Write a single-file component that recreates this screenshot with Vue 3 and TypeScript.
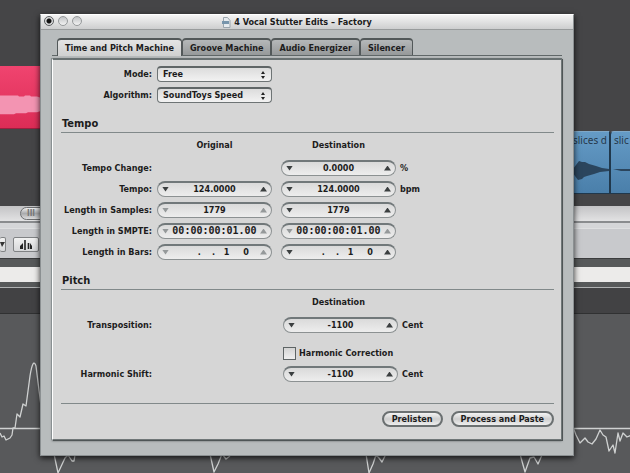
<script setup lang="ts">
import { ref } from 'vue'

interface Stepper {
  id: string
  value: string
  dimDown?: boolean
  dimUp?: boolean
  kind?: 'mono' | 'bars'
}

interface Row {
  label: string
  original?: Stepper
  destination: Stepper
  unit?: string
}

const tabs = ['Time and Pitch Machine', 'Groove Machine', 'Audio Energizer', 'Silencer']
const activeTab = ref(0)
const mode = ref('Free')
const algorithm = ref('SoundToys Speed')
const correction = ref(false)

const tempoRows = ref<Row[]>([
  { label: 'Tempo Change:', destination: { id: 'change', value: '0.0000' }, unit: '%' },
  {
    label: 'Tempo:',
    original: { id: 'tempo-o', value: '124.0000' },
    destination: { id: 'tempo', value: '124.0000' },
    unit: 'bpm',
  },
  {
    label: 'Length in Samples:',
    original: { id: 'samples-o', value: '1779', dimDown: true, dimUp: true },
    destination: { id: 'samples', value: '1779' },
  },
  {
    label: 'Length in SMPTE:',
    original: { id: 'smpte-o', value: '00:00:00:01.00', dimDown: true, dimUp: true, kind: 'mono' },
    destination: { id: 'smpte', value: '00:00:00:01.00', dimDown: true, dimUp: true, kind: 'mono' },
  },
  {
    label: 'Length in Bars:',
    original: { id: 'bars-o', value: '.    .   1     0', dimDown: true, dimUp: true, kind: 'bars' },
    destination: { id: 'bars', value: '.    .   1     0', kind: 'bars' },
  },
])

const transposition = ref('-1100')
const harmonicShift = ref('-1100')
</script>

<template>
  <div class="desktop">
    <section class="arrange">
      <svg class="region pink" viewBox="0 0 60 63" preserveAspectRatio="none">
        <path d="M0 30h18l1 1h5l1-1h5l1 1h6l3 1h20v14H40l-3 1h-9l-2 1H16l-2 1H0z" fill="#f394b2" />
      </svg>
      <div class="region blue first">
        <span>slices d</span>
        <svg class="wave" viewBox="0 0 36 20" preserveAspectRatio="none">
          <path d="M0 9l3-4 3-4 3 1h3l4 2 7 2 6 2 7 1v2l-9 1-6 2-7 2-3 1-2 2-4 1-3-4-2-3z" fill="#2b455d" />
        </svg>
      </div>
      <div class="region blue second">
        <span>slic</span>
        <svg class="wave" viewBox="0 0 36 20" preserveAspectRatio="none">
          <path d="M0 9h36v2H8z" fill="#2b455d" />
        </svg>
      </div>
    </section>
    <div class="scroll-strip"><span class="thumb">III</span></div>
    <div class="tool-strip">
      <button class="tool" type="button" aria-label="Tool menu">
        <svg width="5" height="5" viewBox="0 0 5 5"><path d="M0 0h5L2 5z" fill="#333" /></svg>
      </button>
      <button class="tool" type="button" aria-label="Catch">
        <svg width="14" height="12" viewBox="0 0 14 12">
          <path d="M6 1v10M9.500 4v6" stroke="#222" stroke-width="1.600" />
          <path d="M4 4v6H1V7zM11 4v6h2V7z" fill="#222" />
        </svg>
      </button>
    </div>
    <div class="ruler"></div>
    <div class="marker"></div>
    <div class="sample">
      <svg class="sample-wave" width="630" height="160" viewBox="0 313 630 160">
        <path d="M0 427.500H630" />
        <path d="M0 432l2 4 2-1 2 4 2-1 2-1 2-3 1-7h2l2-14 3 3 3-13 3 2 4-30q3-19 6-10l5 40" />
        <path d="M54 453l4 19 7-15 3-3 4 6h2l1-6M210 453l4 18 4-8 4-10 4 5 4-3M366 453l3 19 4-9 3-9 3 3 3 4 4-8M520 453l5 18 5-14 4-1 4 7 4-9" />
        <path d="M573 426l3 8 4 8 5-5 3 4 4 2 4-5 4-9 3 5 3 2 3 14 4-6 2 8 3-20 2 8 3-8 4 4 5-2" />
      </svg>
    </div>

    <main class="window">
      <header class="titlebar">
        <div class="lights">
          <button class="light close" type="button" aria-label="Close"></button>
          <button class="light" type="button" aria-label="Minimise"></button>
          <button class="light" type="button" aria-label="Zoom"></button>
        </div>
        <svg width="9" height="11" viewBox="0 0 9 11">
          <path d="M1.500.5h4l2.500 3v7h-6.500z" fill="#e6ebef" stroke="#9aa5ad" />
          <path d="M0 4h7v3H0z" fill="#7795ac" />
        </svg>
        <h1>4 Vocal Stutter Edits – Factory</h1>
      </header>

      <nav class="tabs" role="tablist">
        <button
          v-for="(tab, i) in tabs"
          :key="tab"
          type="button"
          role="tab"
          class="tab"
          :class="{ active: i === activeTab }"
          :aria-selected="i === activeTab"
          @click="activeTab = i"
        >{{ tab }}</button>
      </nav>

      <div class="panel">
        <div class="grid">
          <label for="mode">Mode:</label>
          <div class="popup">
            <select id="mode" v-model="mode"><option>Free</option></select>
            <svg width="4" height="8" viewBox="0 0 4 8"><path d="M0 3l2-3 2 3zM0 5h4L2 8z" fill="#222" /></svg>
          </div>
        </div>
        <div class="grid">
          <label for="algorithm">Algorithm:</label>
          <div class="popup">
            <select id="algorithm" v-model="algorithm"><option>SoundToys Speed</option></select>
            <svg width="4" height="8" viewBox="0 0 4 8"><path d="M0 3l2-3 2 3zM0 5h4L2 8z" fill="#222" /></svg>
          </div>
        </div>

        <h2>Tempo</h2>
        <div class="grid heads">
          <span class="col-original">Original</span>
          <span class="col-destination">Destination</span>
        </div>
        <div v-for="row in tempoRows" :key="row.label" class="grid">
          <label :for="row.destination.id">{{ row.label }}</label>
          <div v-if="row.original" class="stepper" :class="row.original.kind">
            <button type="button" class="down" :class="{ dim: row.original.dimDown }" aria-label="Decrease"></button>
            <input v-model="row.original.value" type="text" :aria-label="row.label + ' original'" />
            <button type="button" class="up" :class="{ dim: row.original.dimUp }" aria-label="Increase"></button>
          </div>
          <div class="stepper col-destination" :class="row.destination.kind">
            <button type="button" class="down" :class="{ dim: row.destination.dimDown }" aria-label="Decrease"></button>
            <input :id="row.destination.id" v-model="row.destination.value" type="text" />
            <button type="button" class="up" :class="{ dim: row.destination.dimUp }" aria-label="Increase"></button>
          </div>
          <span v-if="row.unit">{{ row.unit }}</span>
        </div>

        <h2>Pitch</h2>
        <div class="grid heads">
          <span class="col-destination">Destination</span>
        </div>
        <div class="grid pitch">
          <label for="transposition">Transposition:</label>
          <div class="stepper col-destination">
            <button type="button" class="down" aria-label="Decrease"></button>
            <input id="transposition" v-model="transposition" type="text" />
            <button type="button" class="up" aria-label="Increase"></button>
          </div>
          <span>Cent</span>
        </div>
        <div class="grid pitch check-row">
          <label class="check col-destination">
            <input v-model="correction" type="checkbox" />
            <span>Harmonic Correction</span>
          </label>
        </div>
        <div class="grid pitch">
          <label for="shift">Harmonic Shift:</label>
          <div class="stepper col-destination">
            <button type="button" class="down" aria-label="Decrease"></button>
            <input id="shift" v-model="harmonicShift" type="text" />
            <button type="button" class="up" aria-label="Increase"></button>
          </div>
          <span>Cent</span>
        </div>

        <footer class="actions">
          <button type="button">Prelisten</button>
          <button type="button">Process and Paste</button>
        </footer>
      </div>
    </main>
  </div>
</template>

<style>
body {
  background: #58595b;
}
</style>

<style scoped>
.desktop {
  position: relative;
  display: flex;
  flex-direction: column;
  height: 100vh;
  overflow: hidden;
  background: #454547;
  color: #1c1c1c;
  font: bold 9px/14px "DejaVu Sans Condensed", "DejaVu Sans", sans-serif;
}

button,
input,
select {
  font: inherit;
  color: inherit;
  margin: 0;
  padding: 0;
  border: 0;
  outline: 0;
  background: none;
  appearance: none;
}

.arrange {
  position: relative;
  flex: none;
  height: 206px;
}

.region {
  position: absolute;
  box-sizing: border-box;
  height: 63px;
}

.pink {
  top: 66px;
  left: 0;
  width: 60px;
  background: linear-gradient(#f0446f, #dc2c56);
  border-bottom: 1px solid #9b1f3f;
}

.blue {
  top: 131px;
  padding: 1px 0 0 5px;
  overflow: hidden;
  border: 1px solid #20384c;
  border-top-color: #7fa8c8;
  border-radius: 4px 0 0 0;
  background: linear-gradient(#659bc6, #4a7faa);
  color: #26384a;
  font: 10px/14px "Noto Sans", sans-serif;
  white-space: nowrap;
}

.first {
  left: 567px;
  width: 43px;
}

.second {
  left: 610px;
  right: -20px;
  padding-left: 3px;
}

.wave {
  position: absolute;
  right: 0;
  top: 28px;
  width: 36px;
  height: 20px;
}

.scroll-strip {
  flex: none;
  box-sizing: border-box;
  height: 22px;
  padding-top: 1px;
  background: linear-gradient(#c3c3c5, #e2e2e3 15px, #8a8c8e 15px, #8a8c8e 17px, #d5d6d8 17px);
}

.thumb {
  display: block;
  box-sizing: border-box;
  width: 60px;
  height: 13px;
  margin-left: 20px;
  padding-left: 6px;
  border: 1px solid #6d6f71;
  border-radius: 7px;
  background: linear-gradient(#ededee, #aaabad 50%, #dcdcdd);
  color: #777;
  font-size: 8px;
  line-height: 11px;
}

.tool-strip {
  display: flex;
  flex: none;
  gap: 7px;
  box-sizing: border-box;
  height: 31px;
  padding: 8px 0 0;
  border-top: 1px solid #dedfe0;
  border-bottom: 1px solid #3b3c3d;
  background: #c8c9cc;
}

.tool {
  display: flex;
  align-items: center;
  justify-content: center;
  box-sizing: border-box;
  width: 26px;
  height: 15px;
  border: 1px solid #808284;
  border-radius: 2px;
  background: linear-gradient(#f1f1f1, #d6d7d9);
}

.tool:first-child {
  width: 6px;
  border-left: 0;
  overflow: hidden;
}

.ruler {
  flex: none;
  box-sizing: border-box;
  height: 28px;
  border: solid #57595a;
  border-width: 8px 0 5px;
  background: #ecebea;
}

.marker {
  flex: none;
  box-sizing: border-box;
  height: 27px;
  border-top: 1px solid #b0b2b3;
  border-bottom: 1px solid #303132;
  background: #424244;
}

.sample {
  flex: 1;
  overflow: hidden;
  background: #58595b;
}

.sample-wave {
  display: block;
  fill: none;
  stroke: #cfd1d1;
  stroke-width: 1.300;
  stroke-linejoin: round;
}

.window {
  position: absolute;
  inset: 14px 56px 17px 40px;
  display: flex;
  flex-direction: column;
  background: #b8bcbd;
  border: 1px solid #8b9092;
  border-top-color: #fff;
  box-sizing: border-box;
  box-shadow: 0 2px 6px rgba(0, 0, 0, 0.8);
}

.titlebar {
  display: flex;
  align-items: center;
  justify-content: center;
  gap: 3px;
  position: relative;
  flex: none;
  box-sizing: border-box;
  height: 15px;
  padding-right: 20px;
  border-bottom: 1px solid #989b9c;
  background: linear-gradient(#f4f4f4, #cdcecf);
}

.titlebar h1 {
  margin: 0;
  font-size: 9px;
  line-height: 14px;
}

.lights {
  position: absolute;
  left: 3px;
  top: 1px;
  display: flex;
  gap: 4px;
}

.light {
  box-sizing: border-box;
  width: 10px;
  height: 10px;
  border: 1px solid #96999b;
  border-radius: 50%;
  background: linear-gradient(#c2c4c6, #f2f2f2);
}

.close {
  border-color: #5b5e60;
  background: radial-gradient(circle, #111 0 2px, #d8d9da 3px);
}

.tabs {
  display: flex;
  flex: none;
  box-sizing: border-box;
  height: 26px;
  margin: 0 11px;
  padding: 8px 0 0 5px;
  border-bottom: 1px solid #606768;
}

.tab {
  flex: none;
  box-sizing: border-box;
  height: 17px;
  padding: 0 7px;
  border: 1px solid #525859;
  border-top-width: 2px;
  border-bottom: 0;
  border-radius: 4px 4px 0 0;
  background: linear-gradient(#b5b8b9, #96999a);
  line-height: 14px;
  white-space: nowrap;
}

.tab.active {
  height: 18px;
  background: linear-gradient(#e4e4e4, #cfd0d0);
}

.panel {
  display: flex;
  flex-direction: column;
  flex: 1;
  margin: 2px 11px 15px;
  padding: 3px 7px 0 8px;
  border: 1px solid #707778;
  border-top: 2px solid #687071;
  border-left-color: #fff;
  background: #d6d6d6;
  box-shadow: -1px 0 #899092, 1px 1px #4f5556, 0 1px 2px #606768;
}

.grid {
  display: grid;
  grid-template-columns: 91px 115px 115px auto;
  column-gap: 5px;
  align-items: center;
  flex: none;
  height: 21px;
  white-space: nowrap;
}

.grid > label:first-child:not(.check) {
  justify-self: end;
}

.col-original {
  grid-column: 2;
}

.col-destination {
  grid-column: 3;
  margin: 0 -4px 0 4px;
}

.col-destination + span {
  margin-left: 3px;
}

.pitch .col-destination {
  margin: 0 -6px 0 6px;
}

.pitch .col-destination + span {
  margin-left: 5px;
}

.heads {
  height: 24px;
  text-align: center;
}

.popup,
.stepper {
  display: flex;
  align-items: center;
  box-sizing: border-box;
  height: 16px;
  min-width: 0;
}

.popup {
  position: relative;
  border: 1px solid #6e7475;
  border-top: 2px solid #5f6566;
  border-radius: 4px;
  background: linear-gradient(#dcdcdc, #f2f2f2);
}

.popup select {
  width: 100%;
  height: 13px;
  padding: 0 16px 0 5px;
  line-height: 13px;
}

.popup svg {
  position: absolute;
  right: 6px;
  top: 3px;
  pointer-events: none;
}

.stepper {
  padding: 0 4px;
  border: 1px solid #8c9192;
  border-top: 2px solid #71787a;
  border-radius: 8px;
  background: linear-gradient(#dadada, #ededed);
}

.stepper input {
  flex: 1;
  min-width: 0;
  height: 13px;
  text-align: center;
}

.mono input {
  font-family: "DejaVu Sans Mono", monospace;
  font-size: 10px;
}

.bars input {
  padding-right: 11px;
  text-align: right;
}

.down,
.up {
  flex: none;
  width: 7px;
  height: 5px;
  background: #3b3f40;
  clip-path: polygon(0 0, 100% 0, 50% 100%);
}

.up {
  clip-path: polygon(50% 0, 100% 100%, 0 100%);
}

.dim {
  background: #95999a;
}

h2 {
  flex: none;
  box-sizing: border-box;
  height: 28px;
  margin: 0;
  padding: 11px 1px 0;
  border-bottom: 1px solid #81898a;
  font-size: 11px;
  line-height: 16px;
}

.check-row {
  height: 28px;
  padding-bottom: 3px;
  box-sizing: border-box;
  align-items: end;
}

.check {
  display: flex;
  align-items: center;
  gap: 3px;
}

.check input {
  flex: none;
  box-sizing: border-box;
  width: 13px;
  height: 13px;
  border: 1px solid #5e6465;
  background: linear-gradient(#d4d4d4, #eee);
}

.check input:checked {
  background: #555;
}

.actions {
  display: flex;
  justify-content: flex-end;
  gap: 8px;
  margin-top: 19px;
  padding-top: 7px;
  border-top: 1px solid #81898a;
}

.actions button {
  box-sizing: border-box;
  height: 16px;
  padding: 0 8px;
  border: 2px solid #6b7071;
  border-radius: 8px;
  background: linear-gradient(#f4f4f4, #cfcfcf 50%, #eee);
  line-height: 12px;
}
</style>
